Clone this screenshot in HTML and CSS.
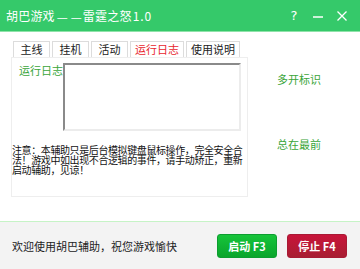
FILE: index.html
```html
<!DOCTYPE html>
<html lang="zh-CN">
<head>
  <meta charset="UTF-8" />
  <title>胡巴游戏——雷霆之怒1.0</title>
  <link rel="stylesheet" href="styles.css">
</head>
<body>
  <div class="window">
    <div class="titlebar">
      <span class="title">胡巴游戏<span class="dash">—</span><span class="dash">—</span>雷霆之怒<span class="ver">1.0</span></span>
      <div class="controls">
        <span class="ctl">?</span>
        <svg class="ctl-icon" width="12" height="12" viewBox="0 0 12 12"><path d="M1 7h10" stroke="#fff" stroke-width="1.5"/></svg>
        <svg class="ctl-icon" width="12" height="12" viewBox="0 0 12 12"><path d="M1.5 1.5l9 9M10.5 1.5l-9 9" stroke="#fff" stroke-width="1.3"/></svg>
      </div>
    </div>

    <div class="main">
      <div class="left">
        <div class="tabs">
          <span class="tab">主线</span>
          <span class="tab">挂机</span>
          <span class="tab">活动</span>
          <span class="tab active">运行日志</span>
          <span class="tab">使用说明</span>
        </div>
        <div class="panel">
          <div class="log-row">
            <span class="log-label">运行日志</span>
            <div class="log-box"></div>
          </div>
          <p class="notice">注意：本辅助只是后台模拟键盘鼠标操作，完全安全合法！游戏中如出现不合逻辑的事件，请手动矫正，重新启动辅助，见谅！</p>
        </div>
      </div>
      <div class="side">
        <span class="side-item first">多开标识</span>
        <span class="side-item">总在最前</span>
      </div>
    </div>

    <div class="footer">
      <span class="welcome">欢迎使用胡巴辅助，祝您游戏愉快</span>
      <div class="buttons">
        <button class="btn start">启动 F3</button>
        <button class="btn stop">停止 F4</button>
      </div>
    </div>
  </div>
</body>
</html>
```

FILE: styles.css
```css
body {
  margin: 0;
  font-family: "Noto Sans CJK SC", "DejaVu Sans", sans-serif;
  font-size: 12px;
  color: #222;
  background: #fff;
}

.window {
  width: 360px;
  height: 269px;
  display: flex;
  flex-direction: column;
  overflow: hidden;
}

.titlebar {
  height: 31px;
  background: #35c96a;
  border-bottom: 1px solid #8fe3a9;
  display: flex;
  align-items: center;
  justify-content: space-between;
  padding: 0 12px 0 6px;
  color: #fff;
}

.title {
  font-size: 12px;
  letter-spacing: 0.2px;
}

.title .dash {
  font-family: "DejaVu Sans", sans-serif;
  font-size: 11px;
  letter-spacing: 0;
  margin: 0 1px 0 2px;
}

.title .ver {
  letter-spacing: 1px;
  margin-left: 1px;
}

.controls {
  display: flex;
  align-items: center;
  gap: 12px;
}

.ctl {
  font-family: "DejaVu Sans", sans-serif;
  font-size: 13px;
  width: 10px;
  text-align: center;
  margin-right: 1px;
}

.main {
  height: 189px;
  display: flex;
  padding: 9px 0 0 11px;
  box-sizing: border-box;
}

.left {
  width: 237px;
  display: flex;
  flex-direction: column;
}

.tabs {
  display: flex;
  gap: 2px;
  padding-left: 2px;
  height: 16px;
}

.tab {
  border: 1px solid #dcdcdc;
  border-bottom: none;
  height: 15px;
  line-height: 14px;
  padding: 0 4px;
  min-width: 27px;
  text-align: center;
  font-size: 11px;
  color: #222;
  background: #fff;
}

.tab.active {
  color: #e8262d;
  min-width: 37px;
}

.panel {
  height: 140px;
  border: 1px solid #eeeeee;
  box-sizing: border-box;
}

.log-row {
  display: flex;
  padding: 5px 0 0 7px;
}

.log-label {
  color: #3aa53a;
  font-size: 11px;
  line-height: 14px;
  width: 44px;
}

.log-box {
  width: 178px;
  height: 68px;
  box-sizing: border-box;
  border-top: 2px solid #8a8a8a;
  border-left: 2px solid #8a8a8a;
  border-right: 2px solid #ececec;
  border-bottom: 2px solid #ececec;
  background: #fff;
}

.notice {
  width: 233px;
  margin: 14px 0 0 0;
  font-size: 10px;
  line-height: 10px;
  color: #111;
  letter-spacing: -0.4px;
}

.side {
  flex: 1;
  display: flex;
  flex-direction: column;
  padding: 31px 0 0 29px;
}

.side-item {
  color: #3aa53a;
  font-size: 11px;
  line-height: 14px;
}

.side-item.first {
  margin-bottom: 51px;
}

.footer {
  flex: 1;
  background: #f3f3f3;
  border-top: 1px solid #c6f3c6;
  display: flex;
  align-items: center;
  justify-content: space-between;
  padding: 0 13px 0 12px;
}

.welcome {
  font-size: 11px;
  color: #222;
}

.buttons {
  display: flex;
  gap: 10px;
}

.btn {
  width: 60px;
  height: 24px;
  border: none;
  border-radius: 3px;
  color: #fff;
  font-family: "Noto Sans CJK SC", "DejaVu Sans", sans-serif;
  font-size: 11px;
  font-weight: bold;
  padding: 0;
}

.btn.start {
  background: linear-gradient(#16c43a, #0aa52c);
  border: 1px solid #0d9d30;
}

.btn.stop {
  background: linear-gradient(#c8143a, #a81e32);
  border: 1px solid #a81a34;
}
```
